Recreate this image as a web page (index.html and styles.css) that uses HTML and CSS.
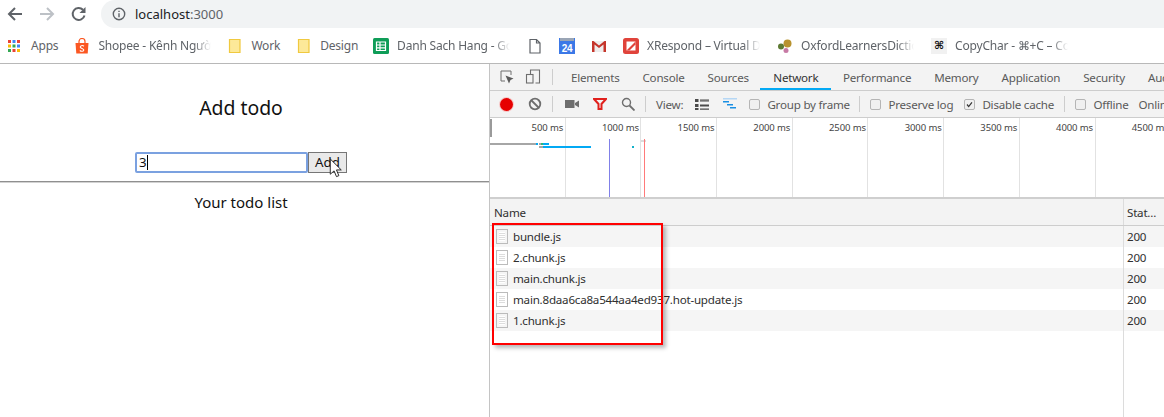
FILE: index.html
```html
<!DOCTYPE html>
<html lang="en">
<head>
<meta charset="utf-8">
<title>localhost:3000</title>
<link rel="stylesheet" href="styles.css">
</head>
<body>
<div class="browser">
  <header class="toolbar">
    <div class="nav">
      <svg class="nav-ico" viewBox="0 0 16 16"><path d="M15 8H3M8 2 2 8 8 14" fill="none" stroke="#5f6368" stroke-width="2"/></svg>
      <svg class="nav-ico" viewBox="0 0 16 16"><path d="M1 8h12M8 2l6 6-6 6" fill="none" stroke="#bdc1c6" stroke-width="2"/></svg>
      <svg class="nav-ico" viewBox="0 0 16 16"><path d="M13.500 9.500A6 6 0 1 1 12 3.800" fill="none" stroke="#5f6368" stroke-width="2"/><path d="M14.500 1v6h-6z" fill="#5f6368"/></svg>
    </div>
    <div class="omnibox">
      <svg class="info" viewBox="0 0 14 14"><circle cx="7" cy="7" r="5.700" fill="none" stroke="#5f6368" stroke-width="1.400"/><path d="M6.300 6.200h1.400v4H6.300zM6.300 3.700h1.400v1.400H6.300z" fill="#5f6368"/></svg>
      <span class="url">localhost<span class="port">:3000</span></span>
    </div>
  </header>

  <nav class="bookmarks">
    <a class="bm apps"><svg class="bi" viewBox="0 0 16 16"><g><rect x="2" y="2" width="3" height="3" fill="#ea4335"/><rect x="6.500" y="2" width="3" height="3" fill="#4285f4"/><rect x="11" y="2" width="3" height="3" fill="#ea4335"/><rect x="2" y="6.500" width="3" height="3" fill="#fbbc05"/><rect x="6.500" y="6.500" width="3" height="3" fill="#34a853"/><rect x="11" y="6.500" width="3" height="3" fill="#4285f4"/><rect x="2" y="11" width="3" height="3" fill="#34a853"/><rect x="6.500" y="11" width="3" height="3" fill="#ea4335"/><rect x="11" y="11" width="3" height="3" fill="#fbbc05"/></g></svg><span>Apps</span></a>
    <a class="bm"><svg class="bi" viewBox="0 0 16 16"><path d="M1.500 5h13l-.8 10.500H2.300z" fill="#fb5722"/><path d="M5 5.500V3.500a3 3 0 0 1 6 0v2" fill="none" stroke="#fb5722" stroke-width="1.200"/><path d="M10 8.200C8.500 7 6 7.700 6.300 9.200c.3 1.500 3.500 1 3.500 2.800 0 1.500-2.500 1.700-4 .5" fill="none" stroke="#fff" stroke-width="1.100"/></svg><span class="fade">Shopee - Kênh Người</span></a>
    <a class="bm"><svg class="bi" viewBox="0 0 16 16"><path class="note" d="M2.500 1.500h10.500v13H2.500z"/></svg><span>Work</span></a>
    <a class="bm"><svg class="bi" viewBox="0 0 16 16"><path class="note" d="M2.500 1.500h10.500v13H2.500z"/></svg><span>Design</span></a>
    <a class="bm nudge-back"><svg class="bi" viewBox="0 0 16 16"><rect width="16" height="16" rx="1.500" fill="#0f9d58"/><path d="M3.500 4h9v8.500h-9zM3.500 7h9M3.500 9.800h9M7 4v8.500" fill="none" stroke="#fff" stroke-width="1.200"/></svg><span class="fade">Danh Sach Hang - Google</span></a>
    <a class="bm nudge"><svg class="bi" viewBox="0 0 16 16"><path d="M3 1.500h6.500l3.500 3.500v10H3zM9.500 1.500V5H13" fill="#fff" stroke="#5f6368" stroke-width="1.200"/></svg></a>
    <a class="bm"><svg class="bi" viewBox="0 0 16 16"><rect y="0" width="16" height="16" fill="#3b78e7"/><rect x="1" width="14" height="3" fill="#9aa5b5"/><text class="cal" x="8" y="13.500">24</text></svg></a>
    <a class="bm"><svg class="bi" viewBox="0 0 16 16"><path d="M1 3h14v11H1z" fill="#eeeeee"/><path d="M1 3v11h2.500V6.500L8 10l4.500-3.500V14H15V3h-1.500L8 7.500 2.500 3z" fill="#c5352b"/></svg></a>
    <a class="bm"><svg class="bi" viewBox="0 0 16 16"><rect width="16" height="16" rx="2.500" fill="#e0433b"/><path d="M3.500 3.500h9v9h-9z" fill="#fff"/><path d="M3.500 12.500 12.500 3.500v3l-6 6z" fill="#e0433b"/></svg><span class="fade">XRespond – Virtual Device</span></a>
    <a class="bm nudge"><svg class="bi" viewBox="0 0 16 16"><circle cx="10.500" cy="5.500" r="4" fill="#b8922e"/><circle cx="4" cy="8.500" r="3" fill="#5d7a32"/><circle cx="9" cy="12.500" r="2.500" fill="#c77aa5"/></svg><span class="fade">OxfordLearnersDictionaries</span></a>
    <a class="bm nudge"><span class="cmd">⌘</span><span class="fade">CopyChar - ⌘+C – Copy</span></a>
  </nav>

  <main class="split">
    <section class="app">
      <h1 class="app-title">Add todo</h1>
      <form class="todo-form">
        <div class="todo-input">3<i class="caret"></i></div>
        <div class="todo-add">Add</div>
      </form>
      <hr class="rule">
      <p class="list-title">Your todo list</p>
    </section>

    <section class="devtools">
      <div class="tabs">
        <svg class="dt-ico" viewBox="0 0 16 16"><path d="M6 12H2V2h10v4" fill="none" stroke="#6e6e6e" stroke-width="1"/><path d="M6.500 6.500 14.500 9.500 11.500 11 10 14.500z" fill="#5a5a5a"/></svg>
        <svg class="dt-ico" viewBox="0 0 16 16"><path d="M5.500 5V1h9v13h-4" fill="none" stroke="#6e6e6e" stroke-width="1.100"/><rect x="1.500" y="5.500" width="6.500" height="8.500" fill="none" stroke="#6e6e6e" stroke-width="1.100"/></svg>
        <i class="sep tab-sep"></i>
        <span class="tab">Elements</span>
        <span class="tab">Console</span>
        <span class="tab">Sources</span>
        <span class="tab active">Network</span>
        <span class="tab">Performance</span>
        <span class="tab">Memory</span>
        <span class="tab">Application</span>
        <span class="tab">Security</span>
        <span class="tab">Audits</span>
      </div>

      <div class="net-bar">
        <i class="rec"></i>
        <svg class="dt-ico2" viewBox="0 0 14 14"><circle cx="7" cy="7" r="5.300" fill="none" stroke="#6e6e6e" stroke-width="1.800"/><path d="M3.500 3.500l7 7" stroke="#6e6e6e" stroke-width="1.800"/></svg>
        <i class="sep tight"></i>
        <svg class="dt-ico2" viewBox="0 0 14 14"><path d="M0 3h9.500v8H0zM10 6l4-2.500v7L10 8z" fill="#6e6e6e"/></svg>
        <svg class="dt-ico2" viewBox="0 0 14 14"><path d="M1 2h12L8.500 7v5h-3V7z" fill="none" stroke="#e0201c" stroke-width="2"/></svg>
        <svg class="dt-ico2" viewBox="0 0 14 14"><circle cx="5.500" cy="5.500" r="4" fill="none" stroke="#6e6e6e" stroke-width="1.400"/><path d="M8.500 8.500 13.500 13.500" stroke="#6e6e6e" stroke-width="1.800"/></svg>
        <i class="sep tight"></i>
        <span class="opt view-label">View:</span>
        <svg class="dt-ico2" viewBox="0 0 14 14"><path d="M0 2h3.500v3H0zM5 2.500h9v1.200H5zM5 4.500h9v.500H5zM0 7h3.500v3H0zM5 7.500h9v2H5zM5 11.500h9v1.200H5zM0 11h3.500v2H0z" fill="#4a4a4a"/></svg>
        <svg class="dt-ico2" viewBox="0 0 14 14"><path d="M0 1h14v1.500H0z" fill="#b5d7f5"/><path d="M0 4h6v1.500H0zM4 7h6v1.500H4zM7 10h6v1.500H7z" fill="#1a8fe3"/></svg>
        <label class="opt check first"><i class="box"></i><span class="lbl w-group">Group by frame</span></label>
        <i class="sep"></i>
        <label class="opt check"><i class="box"></i><span class="lbl w-pres">Preserve log</span></label>
        <label class="opt check"><i class="box on"><svg viewBox="0 0 11 11"><path d="M2.500 5.500 4.500 8 8.500 3" fill="none" stroke="#333" stroke-width="1.500"/></svg></i><span class="lbl w-dis">Disable cache</span></label>
        <i class="sep"></i>
        <label class="opt check"><i class="box"></i><span class="lbl w-off">Offline</span></label>
        <span class="opt online">Online</span>
      </div>

      <div class="overview">
        <div class="tick">500 ms</div>
        <div class="tick">1000 ms</div>
        <div class="tick">1500 ms</div>
        <div class="tick">2000 ms</div>
        <div class="tick">2500 ms</div>
        <div class="tick">3000 ms</div>
        <div class="tick">3500 ms</div>
        <div class="tick">4000 ms</div>
        <div class="tick">4500 ms</div>
        <i class="handle"></i>
        <i class="mark m-gray1"></i><i class="mark m-blue1"></i><i class="mark m-gray2"></i><i class="mark m-green1"></i><i class="mark m-blue2"></i>
        <i class="mark m-gray3"></i><i class="mark m-blue3"></i><i class="mark m-teal"></i><i class="mark m-pale"></i>
        <i class="mark m-dom"></i><i class="mark m-load"></i>
      </div>

      <div class="table">
        <div class="row head"><span class="name">Name</span><span class="status">Stat...</span></div>
        <div class="row"><span class="name"><i class="file"></i>bundle.js</span><span class="status">200</span></div>
        <div class="row"><span class="name"><i class="file"></i>2.chunk.js</span><span class="status">200</span></div>
        <div class="row"><span class="name"><i class="file"></i>main.chunk.js</span><span class="status">200</span></div>
        <div class="row"><span class="name"><i class="file"></i>main.8daa6ca8a544aa4ed937.hot-update.js</span><span class="status">200</span></div>
        <div class="row"><span class="name"><i class="file"></i>1.chunk.js</span><span class="status">200</span></div>
        <div class="row fill"><span class="name"></span><span class="status"></span></div>
      </div>
    </section>
  </main>

  <i class="redbox"></i>
  <svg class="cursor" viewBox="0 0 14 22"><path d="M1 1v16l4-3.500 2.500 6 2.500-1-2.500-6h5z" fill="#fff" stroke="#222" stroke-width="1"/></svg>
</div>
</body>
</html>
```

FILE: styles.css
```css
* { box-sizing: border-box; }
html, body { margin: 0; padding: 0; height: 100%; overflow: hidden; background: #fff; }
body { font-family: "Noto Sans", "Open Sans", sans-serif; color: #303030; }
i { display: block; font-style: normal; }

.browser { position: relative; width: 1164px; height: 417px; display: flex; flex-direction: column; overflow: hidden; }

/* browser chrome */
.toolbar { height: 28px; display: flex; flex: none; }
.nav { width: 101px; display: flex; gap: 16px; padding: 6px 0 0 7px; flex: none; }
.nav-ico { width: 16px; height: 16px; }
.omnibox { flex: 1; background: #f1f3f4; border-radius: 14px 0 0 14px; display: flex; align-items: center; padding-left: 11px; gap: 9px; }
.info { width: 14px; height: 14px; }
.url { font-size: 13px; color: #202124; }
.port { color: #5f6368; }

.bookmarks { height: 36px; flex: none; border-bottom: 1px solid #b8b8b8; display: flex; align-items: center; gap: 16px; padding: 0 0 0 6px; overflow: hidden; }
.bm { display: flex; align-items: center; gap: 8px; font-size: 12px; letter-spacing: -.2px; color: #5f6368; white-space: nowrap; }
.bm.apps { gap: 9px; }
.bm.nudge { margin-left: 1px; }
.bm.nudge-back { margin-left: -1px; }
.bi { width: 16px; height: 16px; flex: none; display: block; }
.note { fill: #fde999; stroke: #f0c93f; stroke-width: 1.200; }
.cal { font: bold 10px "Liberation Sans", sans-serif; fill: #fff; text-anchor: middle; }
.fade { width: 113px; overflow: hidden; -webkit-mask-image: linear-gradient(90deg, #000 85%, transparent); mask-image: linear-gradient(90deg, #000 85%, transparent); }
.cmd { width: 16px; height: 16px; background: #f1f1f1; color: #111; font: bold 11px "DejaVu Sans", sans-serif; text-align: center; line-height: 16px; }

.split { flex: 1; display: flex; min-height: 0; }

/* page under test */
.app { width: 490px; flex: none; border-right: 1px solid #c4c4c4; color: #111; }
.app-title { margin: 31px 7px 0 0; font-size: 19.400px; font-weight: 400; line-height: 26px; text-align: center; }
.todo-form { display: flex; justify-content: center; margin: 31px 7px 0 0; height: 21px; }
.todo-input { width: 173px; height: 21px; border: 2px solid #7ba1e0; border-radius: 2px; font-size: 13.300px; line-height: 17px; padding-left: 2px; display: flex; align-items: center; color: #111; }
.caret { width: 1px; height: 15px; background: #000; }
.todo-add { width: 39px; height: 21px; border: 1px solid #767676; background: #e9e9e9; font-size: 13.300px; line-height: 19px; text-align: center; color: #111; }
.rule { margin: 8px 0 0; border: 0; border-top: 1px solid #8f8f8f; border-bottom: 1px solid #d2d2d2; height: 2px; }
.list-title { margin: 9px 7px 0 0; font-size: 15px; line-height: 20px; text-align: center; }

/* devtools */
.devtools { flex: 1; min-width: 0; display: flex; flex-direction: column; font-size: 11.600px; letter-spacing: -.22px; color: #5a5a5a; }
.tabs { height: 27px; flex: none; background: #f3f3f3; border-bottom: 1px solid #cdcdcd; display: flex; align-items: center; padding-left: 9px; white-space: nowrap; overflow: hidden; }
.dt-ico { width: 16px; height: 16px; margin-right: 10px; flex: none; }
.tab-sep { margin: 0 6.500px 0 1px; }
.sep { width: 1px; height: 16px; background: #cdcdcd; flex: none; }
.tab { height: 26px; line-height: 27px; padding: 0 11.500px; flex: none; }
.tab.active { color: #333; border-bottom: 2px solid #03a9f4; padding: 0 13px; margin: 0; }
.net-bar { height: 27px; flex: none; background: #f3f3f3; border-bottom: 1px solid #cdcdcd; display: flex; align-items: center; padding-left: 10px; white-space: nowrap; overflow: hidden; }
.rec { width: 13px; height: 13px; border-radius: 50%; background: #e60000; box-shadow: 0 0 0 1px #f6c8c8; flex: none; margin-right: 15px; }
.dt-ico2 { width: 14px; height: 14px; margin-right: 14px; flex: none; }
.net-bar .sep { margin: 0 10px 0 -1px; }
.net-bar .sep.tight { margin: 0 12px 0 -4px; }
.opt { flex: none; }
.view-label { margin: 0 12px 0 -2px; }
.check { display: flex; align-items: center; gap: 7px; margin-right: 9px; }
.check.first { margin-left: -2px; }
.box { width: 11px; height: 11px; border: 1px solid #b5b5b5; border-radius: 2px; background: #f0f0f0; }
.box svg { display: block; width: 9px; height: 9px; }
.lbl { display: block; }
.w-group { width: 84px; }
.w-pres { width: 67px; }
.w-dis { width: 74px; }
.w-off { width: 35px; }
.online { margin-left: 1px; }

.overview { position: relative; height: 81px; flex: none; display: flex; border-bottom: 2px solid #cfcfcf; overflow: hidden; background: #fff; }
.tick { width: 75.700px; flex: none; border-right: 1px solid #e2e2e2; text-align: right; padding: 1px 1.500px 0 0; font-size: 9.500px; letter-spacing: -.1px; color: #444; line-height: 18px; white-space: nowrap; }
.handle { position: absolute; left: 0; top: 1px; width: 2px; height: 18px; background: #9a9a9a; }
.mark { position: absolute; }
.m-gray1 { left: 0; top: 25px; width: 46px; height: 2px; background: #a6a6a6; }
.m-blue1 { left: 46px; top: 25px; width: 2px; height: 2px; background: #03a9f4; }
.m-gray2 { left: 49px; top: 25px; width: 2px; height: 2px; background: #a6a6a6; }
.m-green1 { left: 51px; top: 25px; width: 2px; height: 2px; background: #2cb978; }
.m-blue2 { left: 53px; top: 25px; width: 6px; height: 2px; background: #03a9f4; }
.m-gray3 { left: 49px; top: 28px; width: 4px; height: 2px; background: #a6a6a6; }
.m-blue3 { left: 53px; top: 28px; width: 48px; height: 2px; background: #03a9f4; }
.m-teal { left: 142px; top: 28px; width: 2px; height: 2px; background: #12b0c9; }
.m-pale { left: 151px; top: 22px; width: 5px; height: 2px; background: #dcdcdc; }
.m-dom { left: 119px; top: 21px; width: 1px; height: 60px; background: #8080e8; }
.m-load { left: 154px; top: 21px; width: 1px; height: 60px; background: #ff7a7a; }

.table { flex: 1; display: flex; flex-direction: column; min-height: 0; color: #303030; }
.row { height: 21px; flex: none; display: flex; line-height: 21px; white-space: nowrap; }
.row:nth-child(even) { background: #f5f5f5; }
.row.head { height: 27px; line-height: 27px; background: #f3f3f3; border-bottom: 1px solid #cdcdcd; }
.row.fill { flex: 1; background: #fff; }
.name { width: 633px; flex: none; display: flex; align-items: center; padding-left: 6px; }
.head .name { padding-left: 4px; }
.status { flex: 1; border-left: 1px solid #dcdcdc; padding-left: 3px; }
.file { width: 12px; height: 15px; border: 1px solid #bbb; background: repeating-linear-gradient(180deg, #fff 0 1px, #ddd 1px 2px); background-clip: content-box; padding: 2px; margin-right: 5px; flex: none; }

/* overlays */
.redbox { position: absolute; left: 492px; top: 223px; width: 171px; height: 122px; border: 2.500px solid #f00; box-shadow: 3px 3px 4px rgba(0, 0, 0, .28); pointer-events: none; }
.cursor { position: absolute; left: 329px; top: 158px; width: 14px; height: 21px; }
```
